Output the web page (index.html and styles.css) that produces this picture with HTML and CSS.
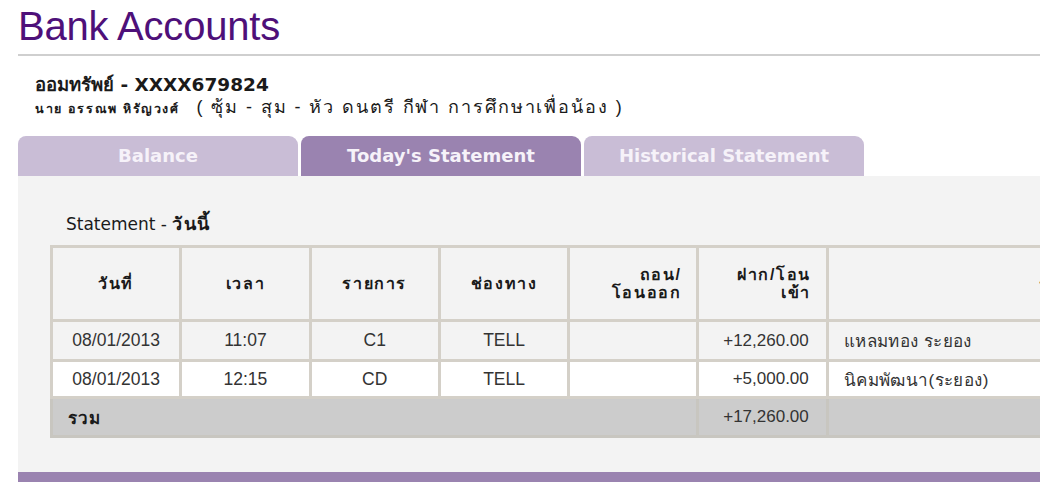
FILE: index.html
```html
<!DOCTYPE html>
<html>
<head>
<meta charset="utf-8">
<link rel="stylesheet" href="styles.css">
</head>
<body>
<div class="page">
  <h1 class="title">Bank Accounts</h1>
  <div class="rule"></div>
  <div class="account">
    <div class="acc-name">ออมทรัพย์ - XXXX679824</div>
    <div class="acc-owner"><span class="owner">นาย อรรณพ หิรัญวงศ์</span><span class="nick">( ซุ้ม - สุม - หัว ดนตรี กีฬา การศึกษาเพื่อน้อง )</span></div>
  </div>
  <div class="tabs">
    <div class="tab">Balance</div>
    <div class="tab active">Today's Statement</div>
    <div class="tab">Historical Statement</div>
  </div>
  <div class="panel">
    <div class="caption">Statement - <b>วันนี้</b></div>
    <table class="stmt">
      <colgroup>
        <col class="c"><col class="c"><col class="c"><col class="c"><col class="c"><col class="c"><col class="wide">
      </colgroup>
      <thead>
        <tr>
          <th>วันที่</th>
          <th>เวลา</th>
          <th>รายการ</th>
          <th>ช่องทาง</th>
          <th class="r">ถอน/<br>โอนออก</th>
          <th class="r">ฝาก/โอน<br>เข้า</th>
          <th>รายละเอียด</th>
        </tr>
      </thead>
      <tbody>
        <tr class="odd">
          <td>08/01/2013</td><td>11:07</td><td>C1</td><td>TELL</td><td></td><td class="r">+12,260.00</td><td class="l desc">แหลมทอง ระยอง</td>
        </tr>
        <tr class="even">
          <td>08/01/2013</td><td>12:15</td><td>CD</td><td>TELL</td><td></td><td class="r">+5,000.00</td><td class="l desc">นิคมพัฒนา(ระยอง)</td>
        </tr>
        <tr class="total">
          <td class="l lbl" colspan="4">รวม</td><td></td><td class="r">+17,260.00</td><td></td>
        </tr>
      </tbody>
    </table>
  </div>
  <div class="footer-bar"></div>
</div>
</body>
</html>
```
FILE: styles.css
```css
html, body {
  margin: 0;
  padding: 0;
  background: #ffffff;
  overflow: hidden;
}
.page {
  width: 1040px;
  padding-left: 18px;
  box-sizing: border-box;
  font-family: "Liberation Sans", Arial, sans-serif;
}
.title {
  margin: 0;
  padding-top: 4px;
  height: 48px;
  font-family: "Liberation Sans", Arial, sans-serif;
  font-weight: normal;
  font-size: 40px;
  line-height: 44px;
  letter-spacing: -0.2px;
  color: #4e1079;
}
.rule {
  height: 2px;
  background: #cfcfcf;
  margin-top: 2px;
}
.account {
  padding: 17px 0 0 17px;
  height: 62px;
  box-sizing: border-box;
  color: #1a1a1a;
}
.acc-name {
  font-family: "DejaVu Sans", Verdana, sans-serif;
  font-weight: bold;
  font-size: 18.5px;
  line-height: 23px;
}
.acc-owner {
  line-height: 22px;
  display: flex;
  align-items: baseline;
  gap: 17px;
}
.owner {
  font-size: 12.5px;
  font-weight: bold;
  letter-spacing: 1.6px;
}
.nick {
  font-size: 18px;
  letter-spacing: 1.9px;
}
.tabs {
  display: flex;
  gap: 3px;
  margin-top: 18px;
  height: 40px;
}
.tab {
  width: 280px;
  height: 40px;
  background: #c9bdd6;
  border-radius: 8px 9px 0 0;
  color: #f6f2f9;
  font-family: "DejaVu Sans", Verdana, sans-serif;
  font-weight: bold;
  font-size: 18px;
  line-height: 40px;
  text-align: center;
}
.tab.active {
  background: #9a83b0;
}
.panel {
  background: #f3f3f3;
  height: 296px;
  padding: 38px 0 0 32px;
  box-sizing: border-box;
  overflow: hidden;
}
.caption {
  padding-left: 16px;
  font-family: "DejaVu Sans", Verdana, sans-serif;
  font-size: 17px;
  color: #1a1a1a;
  height: 31px;
  line-height: 20px;
}
.caption b {
  font-family: "Liberation Sans", Arial, sans-serif;
  font-size: 18px;
  letter-spacing: 1.5px;
}
.stmt {
  border-collapse: collapse;
  table-layout: fixed;
  width: 1296px;
  font-size: 17.5px;
  color: #333333;
  border: 3px solid #d4d0c8;
}
.stmt col.c { width: 129px; }
.stmt col.wide { width: 516px; }
.stmt th, .stmt td {
  border: 3px solid #d4d0c8;
  text-align: center;
  padding: 0 15px;
}
.stmt th {
  height: 71px;
  font-size: 16px;
  font-weight: bold;
  color: #1a1a1a;
  letter-spacing: 1.6px;
  line-height: 18px;
  background: #f3f3f3;
}
.stmt td {
  height: 37px;
}
.stmt tr.even td { height: 34px; }
.stmt .r { text-align: right; }
.stmt .l { text-align: left; }
.stmt td.r { padding-right: 17px; font-size: 17px; }
.stmt .desc { font-size: 17px; letter-spacing: 0.4px; }
.stmt tr.odd td { background: #f3f3f3; }
.stmt tr.even td { background: #ffffff; }
.stmt tr.total td {
  background: #cccccc;
  height: 36px;
  border-color: #c8c6c0;
}
.stmt tr.total td.lbl {
  font-weight: bold;
  font-size: 17px;
  letter-spacing: 1px;
  color: #1a1a1a;
  border-right-color: #cccccc;
}
.footer-bar {
  height: 20px;
  background: #9a83b0;
}
```
